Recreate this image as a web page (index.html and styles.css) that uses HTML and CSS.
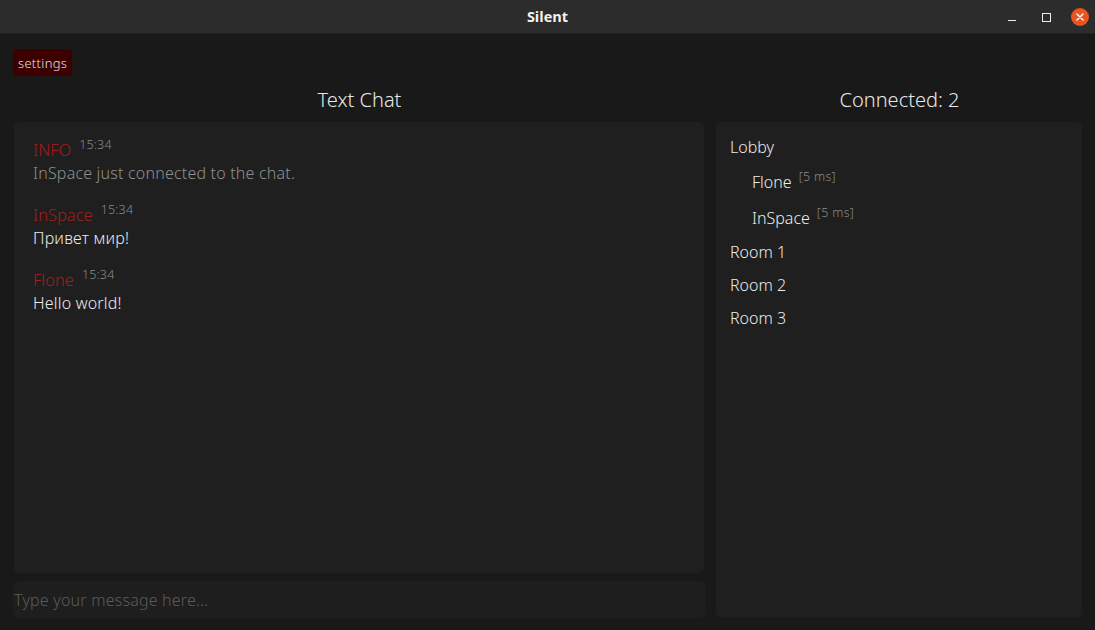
FILE: index.html
```html
<!DOCTYPE html>
<html>
<head>
<meta charset="utf-8">
<link rel="stylesheet" href="styles.css">
</head>
<body>
<div class="titlebar">
  <div class="title">Silent</div>
  <div class="controls">
    <span class="ctl min"></span>
    <span class="ctl max"></span>
    <span class="close">
      <svg width="16" height="16" viewBox="0 0 16 16"><path d="M4.5 4.5 L11.5 11.5 M11.5 4.5 L4.5 11.5" stroke="#fff" stroke-width="1.6" stroke-linecap="round"/></svg>
    </span>
  </div>
</div>
<div class="app">
  <div class="toolbar"><button class="settings">settings</button></div>
  <div class="columns">
    <div class="chatcol">
      <div class="heading">Text Chat</div>
      <div class="panel chat">
        <div class="msg">
          <div class="meta"><span class="name">INFO</span><span class="time">15:34</span></div>
          <div class="text info">InSpace just connected to the chat.</div>
        </div>
        <div class="msg">
          <div class="meta"><span class="name">InSpace</span><span class="time">15:34</span></div>
          <div class="text">Привет мир!</div>
        </div>
        <div class="msg">
          <div class="meta"><span class="name">Flone</span><span class="time">15:34</span></div>
          <div class="text">Hello world!</div>
        </div>
      </div>
      <input class="input" type="text" placeholder="Type your message here...">
    </div>
    <div class="usercol">
      <div class="heading">Connected: 2</div>
      <div class="panel users">
        <div class="room">Lobby</div>
        <div class="user">Flone<span class="ping">[5 ms]</span></div>
        <div class="user">InSpace<span class="ping">[5 ms]</span></div>
        <div class="room">Room 1</div>
        <div class="room">Room 2</div>
        <div class="room">Room 3</div>
      </div>
    </div>
  </div>
</div>
</body>
</html>
```
FILE: styles.css
```css
* { box-sizing: border-box; }
html, body { margin: 0; padding: 0; }
body {
  width: 1095px;
  height: 630px;
  background: #191919;
  font-family: "Noto Sans", "Open Sans", sans-serif;
  color: #e6e6e6;
  overflow: hidden;
}
.titlebar {
  height: 34px;
  background: #2c2c2c;
  border-bottom: 1px solid #202020;
  display: flex;
  align-items: center;
  justify-content: center;
  position: relative;
}
.title {
  font-family: "Open Sans", "Noto Sans", sans-serif;
  font-weight: 700;
  font-size: 14.5px;
  color: #f2f2f2;
}
.controls {
  position: absolute;
  right: 6px;
  top: 6px;
  display: flex;
  align-items: center;
}
.ctl {
  width: 34px;
  height: 22px;
  display: flex;
  align-items: center;
  justify-content: center;
}
.min::after {
  content: "";
  width: 8px;
  height: 1px;
  background: #eee;
  margin-top: 6px;
}
.max::after {
  content: "";
  width: 7px;
  height: 7px;
  border: 1px solid #eee;
}
.close {
  margin-left: 8px;
  width: 18px;
  height: 18px;
  border-radius: 50%;
  background: #e95420;
  display: flex;
  align-items: center;
  justify-content: center;
}
.close svg { width: 14px; height: 14px; }
.app {
  padding: 15px 13px 12px 13px;
  display: flex;
  flex-direction: column;
  height: 596px;
}
.toolbar { height: 27px; display: flex; }
.settings {
  background: #3d0000;
  color: #e0e0e0;
  border: none;
  border-radius: 4px;
  padding: 0 5px;
  height: 27px;
  font-family: "Noto Sans", sans-serif;
  font-size: 13px;
  font-weight: 300;
  letter-spacing: 0.3px;
}
.columns {
  flex: 1;
  display: flex;
  gap: 11px;
  margin-top: 9px;
}
.chatcol {
  width: 692px;
  display: flex;
  flex-direction: column;
}
.usercol {
  flex: 1;
  display: flex;
  flex-direction: column;
}
.heading {
  height: 37px;
  text-align: center;
  font-size: 20px;
  font-weight: 300;
  color: #e8e8e8;
  line-height: 30px;
  margin-left: 1px;
}
.panel {
  background: #1f1f1f;
  border-radius: 5px;
}
.chat {
  flex: 1;
  margin-left: 1px;
  margin-right: 1px;
  padding: 13px 19px;
}
.msg { margin-bottom: 16px; }
.meta { height: 26px; display: flex; align-items: flex-start; }
.name {
  color: #a31d1d;
  font-size: 16.5px;
  line-height: 30px;
  font-weight: 300;
}
.time {
  color: #8a8a8a;
  font-size: 12.5px;
  margin-left: 8px;
  line-height: 20px;
  font-weight: 300;
  letter-spacing: 0.2px;
}
.text {
  margin-top: 1px;
  font-size: 16px;
  line-height: 22px;
  font-weight: 300;
  letter-spacing: 0.2px;
  color: #ececec;
}
.text.info { color: #8f8f8f; }
.input {
  margin-top: 8px;
  height: 37px;
  background: #1e1e1e;
  border: none;
  border-radius: 5px;
  padding: 0 1px;
  font-family: "Noto Sans", sans-serif;
  font-size: 16px;
  font-weight: 300;
  letter-spacing: 0.2px;
  color: #ddd;
  outline: none;
}
.input::placeholder { color: #5c5c5c; }
.users {
  flex: 1;
  margin-bottom: 1px;
  padding: 9px 14px;
}
.room {
  font-size: 16px;
  line-height: 33px;
  font-weight: 300;
  color: #ececec;
}
.user {
  font-size: 16px;
  line-height: 36px;
  font-weight: 300;
  padding-left: 22px;
  color: #ececec;
  display: flex;
  align-items: flex-start;
}
.ping {
  font-size: 12.5px;
  color: #8a8a8a;
  margin-left: 7px;
  line-height: 26px;
  font-weight: 300;
  letter-spacing: 0.3px;
}
```
